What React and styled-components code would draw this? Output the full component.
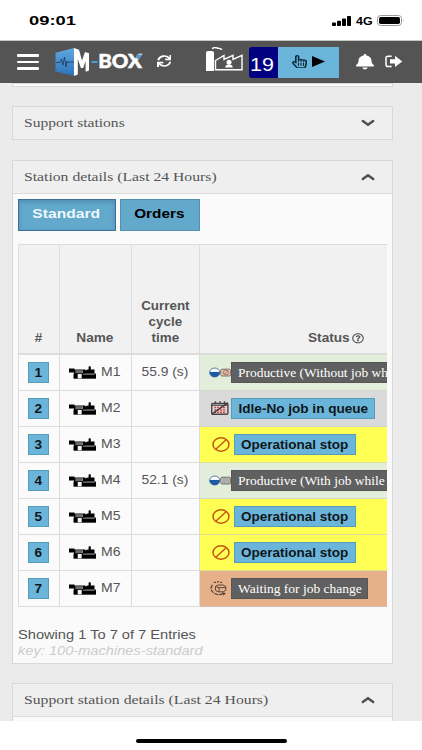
import React from "react";
import styled, { createGlobalStyle } from "styled-components";
import { FaSync, FaRegHandPointer, FaBell, FaRegQuestionCircle } from "react-icons/fa";

const GlobalStyle = createGlobalStyle`
  * { box-sizing: border-box; }
  body { margin: 0; background: #fff; }
`;

const sans = '"Liberation Sans", Arial, sans-serif';
const serif = '"Liberation Serif", "Times New Roman", serif';

const Screen = styled.div`
  width: 422px;
  height: 750px;
  display: flex;
  flex-direction: column;
  overflow: hidden;
  background: #fff;
  font-family: ${sans};
  font-size: 12.9px;
  color: #555;
`;

/* Wide lettering: glyphs are expanded horizontally from the chosen edge. */
const Wide = styled.span`
  display: inline-block;
  white-space: nowrap;
  transform: scaleX(${(p) => p.$x || 1.135});
  transform-origin: ${(p) => p.$from || "left"} center;
`;

const StatusBar = styled.header`
  flex: none;
  height: 41px;
  display: flex;
  align-items: center;
  padding: 2px 17px 0 29px;
  border-bottom: 1px solid #c6c6c6;
  color: #000;
`;

const Clock = styled.div`
  flex: 1;
  font: bold 13.4px/16px ${sans};
`;

const Network = styled.div`
  width: 21px;
  margin-left: 4px;
  font: bold 11px/14px ${sans};
`;

const NavBar = styled.nav`
  flex: none;
  height: 42px;
  display: flex;
  align-items: center;
  padding: 0 17px;
  background: #545454;
  color: #fff;
`;

const Burger = styled.div`
  width: 21.5px;
  display: grid;
  gap: 3.7px;
  span { height: 2.7px; border-radius: 1px; background: #fff; }
`;

const Glyph = styled.span`
  display: flex;
  flex: none;
  width: ${(p) => p.$w}px;
  height: ${(p) => p.$h}px;
  margin-left: ${(p) => p.$ml || 0}px;
  margin-top: ${(p) => p.$mt || 0}px;
  color: ${(p) => p.$c || "inherit"};
  svg { width: 100%; height: 100%; display: block; }
`;

const Counter = styled.div`
  width: 29px;
  height: 31px;
  margin-left: 5px;
  padding-left: 1px;
  border-radius: 3px 0 0 3px;
  background: #000080;
  font-size: 18.5px;
  line-height: 36px;
`;

const RunButton = styled.button`
  width: 61px;
  height: 31px;
  display: flex;
  align-items: center;
  padding: 0 0 0 14px;
  border: 0;
  background: #6ab5d9;
  color: #0b2a3c;
`;

const Content = styled.main`
  height: 638px;
  flex: none;
  overflow: hidden;
  padding: 0 29px 0 12px;
  background: #ebebeb;
`;

const Panel = styled.section`
  border: solid #d8d8d8;
  border-width: 1px 1.5px 1.5px 1px;
  background: #fafafa;
  height: ${(p) => p.$h}px;
  margin-bottom: ${(p) => p.$gap || 0}px;
  overflow: hidden;
`;

const PanelHead = styled.div`
  height: 33px;
  display: flex;
  align-items: center;
  justify-content: space-between;
  padding: 0 17px 0 11px;
  background: #efefef;
  border-bottom: 1px solid #dcdcdc;
  font: 13.3px/16px ${serif};
  color: #555;
`;

const Body = styled.div`
  padding: 5px 5px 0 5px;
`;

const Tabs = styled.div`
  display: flex;
  gap: 4.5px;
`;

const Tab = styled.button`
  width: ${(p) => p.$w}px;
  height: 32px;
  display: flex;
  align-items: center;
  justify-content: center;
  padding: 0 1px 1px 0;
  border: 1px solid ${(p) => (p.$active ? "#3f6f94" : "#5492b0")};
  background: #63a9cc;
  box-shadow: ${(p) => (p.$active ? "inset 0 2px 4px rgba(40,90,130,.35)" : "none")};
  color: ${(p) => (p.$active ? "#eef8ff" : "#000")};
  font: bold 13px/16px ${sans};
`;

const Table = styled.div`
  margin-top: 13px;
  border: solid #dcdcdc;
  border-width: 1px 0 0 1px;
  overflow: hidden;
`;

const Row = styled.div`
  display: grid;
  grid-template-columns: 41px 72px 68px 1fr;
  height: ${(p) => (p.$head ? 110 : 36)}px;
  background: ${(p) => (p.$head ? "#f1f1f1" : "#fbfbfb")};
  font-weight: ${(p) => (p.$head ? "bold" : "normal")};
`;

const Cell = styled.div`
  display: flex;
  align-items: center;
  justify-content: center;
  min-width: 0;
  padding-right: 1px;
  border-right: 1px solid #dcdcdc;
  border-bottom: 1px solid #dcdcdc;
`;

const HeadCell = styled(Cell)`
  align-items: flex-end;
  padding-bottom: 6px;
  border-bottom-width: 2px;
  font-size: 12.4px;
  line-height: 15.7px;
  text-align: center;
`;

const StatusHead = styled(HeadCell)`
  justify-content: flex-start;
  padding-left: 107.5px;
  border-right: 0;
`;

const NameCell = styled(Cell)`
  justify-content: flex-start;
  padding-left: 9px;
`;

const StatusCell = styled(Cell)`
  justify-content: flex-start;
  padding-left: ${(p) => p.$pad}px;
  padding-right: 0;
  border-right: 0;
  border-bottom-color: rgba(200, 200, 200, 0.6);
  overflow: hidden;
  background: ${(p) => p.$bg};
`;

const Badge = styled.span`
  flex: none;
  width: ${(p) => p.$w}px;
  height: 20.5px;
  margin-top: 1px;
  display: flex;
  align-items: center;
  justify-content: center;
  border: 1px solid #559cb8;
  background: #6ab5d9;
  color: #10151a;
  font: bold 12px/14px ${sans};
`;

const Tag = styled.span`
  flex: none;
  width: ${(p) => p.$w}px;
  height: 20.5px;
  margin-top: 1px;
  display: flex;
  align-items: center;
  padding-left: 6px;
  border: 1px solid #555;
  background: #606060;
  color: #fff;
  font: 12.4px/14px ${serif};
`;

const Summary = styled.div`
  margin-top: 19px;
  line-height: 17px;
`;

const Key = styled.div`
  line-height: 16px;
  font-style: italic;
  color: #ccc;
`;

const HomeArea = styled.footer`
  flex: 1;
  display: flex;
  justify-content: center;
  padding-top: 18px;
`;

const HomeBar = styled.div`
  width: 151px;
  height: 4px;
  border-radius: 3px;
  background: #000;
`;

const Chevron = ({ up }) => (
  <Glyph $w={14} $h={8}>
    <svg viewBox="0 0 14 8" preserveAspectRatio="none">
      <path d={up ? "M1.8 6 L7 2.2 L12.2 6" : "M1.8 2 L7 5.8 L12.2 2"} fill="none" stroke="#505050" strokeWidth="2.5" strokeLinecap="round" />
    </svg>
  </Glyph>
);

const Signal = () => (
  <Glyph $w={20} $h={10} $mt={-1}>
    <svg viewBox="0 0 20 10">
      <rect x="0" y="6.5" width="4" height="3.5" rx=".8" />
      <rect x="5" y="4.8" width="4" height="5.2" rx=".8" />
      <rect x="10" y="2.5" width="4" height="7.5" rx=".8" />
      <rect x="15" y="0" width="4" height="10" rx=".8" />
    </svg>
  </Glyph>
);

const Battery = () => (
  <Glyph $w={28} $h={11} $mt={-1}>
    <svg viewBox="0 0 28 11">
      <rect x=".5" y=".5" width="24" height="10" rx="3" fill="#fff" stroke="#999" />
      <rect x="2" y="2" width="21" height="7" rx="1.7" />
      <path d="M26 4 q1.4 1.5 0 3z" fill="#999" />
    </svg>
  </Glyph>
);

const Logo = () => (
  <Glyph $w={90} $h={30} $ml={16}>
    <svg viewBox="0 0 90 30">
      <defs>
        <linearGradient id="cube" x1="0" y1="0" x2="0" y2="1">
          <stop offset="0" stopColor="#62a9df" />
          <stop offset="1" stopColor="#2d72b8" />
        </linearGradient>
      </defs>
      <path d="M.5 5.8 L19 1 V29 L.5 24.5z" fill="url(#cube)" />
      <path d="M1 15.5 H5 L6.5 12 L8 18 L9.5 10 L11 20 L12 14 L13 16 L14 15 H19" fill="none" stroke="#1b395c" strokeWidth=".8" />
      <path d="M19 1 L24 2.8 L27 13.5 L30 5 L34 6.2 V23.6 L30.6 24.8 V14 L28.2 21 H25.9 L22.8 12 V27.5 L19 29z" fill="#fff" />
      <rect x="36.5" y="14" width="6" height="2" fill="#4d9ad4" />
      <text x="43.3" y="21.2" fontFamily="Lato, sans-serif" fontWeight="900" fontSize="18.8" fill="#fff" stroke="#fff" strokeWidth=".5" textLength="43.5" lengthAdjust="spacingAndGlyphs">BOX</text>
      <path d="M82.2 7.6 H87.5 L83.8 12.6 L80.4 10.4z" fill="#4d9ad4" />
    </svg>
  </Glyph>
);

const Factory = () => (
  <Glyph $w={38} $h={24} $ml={35} $mt={-6}>
    <svg viewBox="0 0 38 24">
      <path d="M0 5.5 Q0 4 2 4 H6 Q8 4 8 5.5 V24 H0z" fill="#fff" />
      <path d="M6 1.6 Q9 -.4 11.5 1.2 Q14 1 16 2.6" fill="none" stroke="#fff" strokeWidth="1.4" />
      <path d="M9.5 13.5 L18 8.5 V12.5 L27 8.3 V12.5 L36 8.3 V22.8 H9.5z" fill="none" stroke="#fff" strokeWidth="1.4" />
      <circle cx="23" cy="15.3" r="2.5" fill="#fff" />
      <path d="M19.3 20.6 Q19.3 17.6 23 17.6 Q26.7 17.6 26.7 20.6z" fill="#fff" />
    </svg>
  </Glyph>
);

const Play = () => (
  <Glyph $w={13} $h={11} $ml={5} $mt={-1.5} $c="#000">
    <svg viewBox="0 0 13 11"><path d="M0 0 L13 5.5 L0 11z" /></svg>
  </Glyph>
);

const SignOut = () => (
  <Glyph $w={17.5} $h={13} $ml={11} $mt={-1}>
    <svg viewBox="0 0 17.5 13" preserveAspectRatio="none">
      <path d="M6.7 1.2 H3 Q1 1.2 1 3 V9.8 Q1 11.6 3 11.6 H6.7" fill="none" stroke="#fff" strokeWidth="1.5" />
      <path d="M5 4.2 H10 V.7 L17.2 6.4 L10 12.1 V8.6 H5z" fill="#fff" />
    </svg>
  </Glyph>
);

const Machine = () => (
  <Glyph $w={27} $h={13} $mt={1}>
    <svg viewBox="0 0 27 13">
      <path d="M0 2.6 H5.5 V3.6 H16.5 V8 H5 V6.6 H0z" />
      <path d="M15 5.2 L18.5 3.4 H25.5 V7.8 H15z" />
      <path d="M4.5 7.6 H27 V12.7 H4.5z" />
      <path d="M19.6 .8 L20.7 0 L21.8 .8 V4 H19.6z" />
      <rect x="8.7" y="8" width="4" height="4.4" fill="#f4f4f4" />
      <rect x="6.5" y="4.2" width="7.5" height="3" fill="#8a8a8a" />
      <path d="M8 4.2 v3 M10 4.2 v3 M12 4.2 v3" stroke="#333" strokeWidth=".7" />
      <path d="M14 8.2 H25.5" stroke="#ccc" strokeWidth=".7" />
    </svg>
  </Glyph>
);

const Productive = ({ withJob }) => (
  <Glyph $w={22} $h={11}>
    <svg viewBox="0 0 22 11">
      <ellipse cx="5.7" cy="5.5" rx="5.1" ry="4.5" fill="#f4faff" stroke="#456f9d" strokeWidth=".9" />
      <path d="M.6 4.9 H10.8 Q10.3 10 5.7 10 Q1.1 10 .6 4.9z" fill="#1c58a3" />
      <rect x="11.7" y="2.2" width="10" height="6.8" rx="1.4" fill={withJob ? "#c8ccc3" : "#ddc6b7"} stroke="#66665d" strokeWidth=".9" />
      {withJob ? (
        <path d="M14 2.5 v6 M16 2.5 v6 M18 2.5 v6 M20 2.5 v6" stroke="#777" strokeWidth=".7" />
      ) : (
        <g fill="none" stroke="#b36a4c" strokeWidth=".9">
          <ellipse cx="16.9" cy="5.6" rx="2.8" ry="2.2" />
          <path d="M15 7.2 L19 4" />
        </g>
      )}
    </svg>
  </Glyph>
);

const NoQueue = () => (
  <Glyph $w={18} $h={14}>
    <svg viewBox="0 0 18 14">
      <rect x=".7" y="2.4" width="16.2" height="10.8" rx="1" fill="#ded8d8" stroke="#4a4446" strokeWidth="1.4" />
      <path d="M1 4.2 H17" stroke="#4a4446" strokeWidth="1.2" />
      <path d="M4.5 .3 V3.3 M9 .3 V3.3 M13.5 .3 V3.3" stroke="#4a4446" strokeWidth="1.4" />
      <path d="M3.2 6.6 H15 M3.2 8.9 H15 M3.2 11.2 H15" stroke="#d04848" strokeWidth="1.5" strokeDasharray="2 .9" />
      <path d="M1.2 12.8 L17 1.8" stroke="#333" strokeWidth="1.3" />
    </svg>
  </Glyph>
);

const Stop = () => (
  <Glyph $w={18} $h={15}>
    <svg viewBox="0 0 18 15">
      <ellipse cx="9" cy="7.5" rx="8" ry="6.7" fill="none" stroke="#c4560f" strokeWidth="1.5" />
      <path d="M3.8 12.2 L14.2 2.8" stroke="#c4560f" strokeWidth="1.4" />
    </svg>
  </Glyph>
);

const Waiting = () => (
  <Glyph $w={17} $h={15}>
    <svg viewBox="0 0 17 15" fill="none" stroke="#4b3e35">
      <path d="M4 1.8 Q8.5 -.2 13 2.2" strokeWidth="1.2" strokeDasharray="1.8 1.4" />
      <path d="M2.4 3.8 Q-.5 8 3.1 11.4 Q7.5 15 13 12.8" strokeWidth="1.2" strokeDasharray="4 1" />
      <path d="M12 11.2 L15.8 12 L13.6 14.6z" fill="#4b3e35" stroke="none" />
      <path d="M5.5 5.5 L8 4 H13 L15.8 5.5 V9.3 L13.2 10.8 H8 L5.5 9.3z M5.5 5.5 L9 6.6 H15.8 M9 6.6 V10.6" strokeWidth=".9" />
    </svg>
  </Glyph>
);

const GREEN = "#e2eeda";
const YELLOW = "#ffff54";
const rows = [
  { cycle: "55.9 (s)", bg: GREEN, icon: <Productive />, tag: "Productive (Without job wh", w: 200, pad: 8.5, gap: 0.5, x: 1.085 },
  { bg: "#dadada", icon: <NoQueue />, badge: "Idle-No job in queue", w: 144, pad: 11, gap: 2, x: 1.13 },
  { bg: YELLOW, icon: <Stop />, badge: "Operational stop", w: 121.5, pad: 12, gap: 4, x: 1.125 },
  { cycle: "52.1 (s)", bg: GREEN, icon: <Productive withJob />, tag: "Productive (With job while", w: 200, pad: 8.5, gap: 0.5, x: 1.09 },
  { bg: YELLOW, icon: <Stop />, badge: "Operational stop", w: 121.5, pad: 12, gap: 4, x: 1.125 },
  { bg: YELLOW, icon: <Stop />, badge: "Operational stop", w: 121.5, pad: 12, gap: 4, x: 1.125 },
  { bg: "#e6b089", icon: <Waiting />, tag: "Waiting for job change", w: 137, pad: 10, gap: 4, x: 1.09 },
];

const Spaced = styled.span`
  display: flex;
  margin-left: ${(p) => p.$gap}px;
`;

const NameText = styled.span`
  margin-left: 4.5px;
  margin-top: -1px;
`;

const CycleText = styled.span`
  margin-top: -1px;
`;

const HelpIcon = styled(Glyph)`
  margin-left: 7px;
  margin-bottom: 3px;
`;

export default function App() {
  return (
    <>
      <GlobalStyle />
      <Screen>
        <StatusBar>
          <Clock><Wide $x={1.37}>09:01</Wide></Clock>
          <Signal />
          <Network><Wide $x={1.13}>4G</Wide></Network>
          <Battery />
        </StatusBar>
        <NavBar>
          <Burger><span /><span /><span /></Burger>
          <Logo />
          <Glyph $w={14.5} $h={12} $ml={12} $mt={-2}><FaSync preserveAspectRatio="none" /></Glyph>
          <Factory />
          <Counter><Wide $x={1.16}>19</Wide></Counter>
          <RunButton>
            <Glyph $w={15} $h={13.5} $mt={-1.5}><FaRegHandPointer preserveAspectRatio="none" /></Glyph>
            <Play />
          </RunButton>
          <Glyph $w={18} $h={15.5} $ml={17}><FaBell preserveAspectRatio="none" /></Glyph>
          <SignOut />
        </NavBar>
        <Content>
          <Panel $h={4} $gap={19} />
          <Panel $h={34} $gap={19.5}>
            <PanelHead><Wide $x={1.17}>Support stations</Wide><Chevron /></PanelHead>
          </Panel>
          <Panel $h={504.5} $gap={19}>
            <PanelHead><Wide $x={1.18}>Station details (Last 24 Hours)</Wide><Chevron up /></PanelHead>
            <Body>
              <Tabs>
                <Tab $active $w={97.5}><Wide $x={1.2} $from="center">Standard</Wide></Tab>
                <Tab $w={80}><Wide $x={1.18} $from="center">Orders</Wide></Tab>
              </Tabs>
              <Table>
                <Row $head>
                  <HeadCell><Wide $x={1.08} $from="center">#</Wide></HeadCell>
                  <HeadCell><Wide $x={1.1} $from="center">Name</Wide></HeadCell>
                  <HeadCell><Wide $x={1.08} $from="center">Current<br />cycle<br />time</Wide></HeadCell>
                  <StatusHead>
                    <Wide $x={1.1}>Status</Wide>
                    <HelpIcon $w={12} $h={10.5}><FaRegQuestionCircle preserveAspectRatio="none" /></HelpIcon>
                  </StatusHead>
                </Row>
                {rows.map((r, i) => (
                  <Row key={i}>
                    <Cell><Badge $w={21.5}><Wide $from="center">{i + 1}</Wide></Badge></Cell>
                    <NameCell>
                      <Machine />
                      <NameText><Wide $x={1.09}>M{i + 1}</Wide></NameText>
                    </NameCell>
                    <Cell>{r.cycle && <CycleText><Wide $x={1.07} $from="center">{r.cycle}</Wide></CycleText>}</Cell>
                    <StatusCell $bg={r.bg} $pad={r.pad}>
                      {r.icon}
                      <Spaced $gap={r.gap}>
                        {r.badge
                          ? <Badge $w={r.w}><Wide $x={r.x} $from="center">{r.badge}</Wide></Badge>
                          : <Tag $w={r.w}><Wide $x={r.x}>{r.tag}</Wide></Tag>}
                      </Spaced>
                    </StatusCell>
                  </Row>
                ))}
              </Table>
              <Summary><Wide>Showing 1 To 7 of 7 Entries</Wide></Summary>
              <Key><Wide>key: 100-machines-standard</Wide></Key>
            </Body>
          </Panel>
          <Panel $h={80}>
            <PanelHead><Wide $x={1.183}>Support station details (Last 24 Hours)</Wide><Chevron up /></PanelHead>
          </Panel>
        </Content>
        <HomeArea><HomeBar /></HomeArea>
      </Screen>
    </>
  );
}
